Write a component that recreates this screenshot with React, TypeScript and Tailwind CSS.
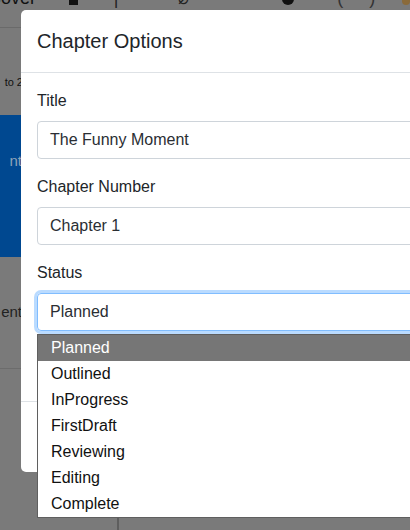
import React from "react";

const statuses = [
  "Planned",
  "Outlined",
  "InProgress",
  "FirstDraft",
  "Reviewing",
  "Editing",
  "Complete",
];

function Field({
  label,
  value,
  focused,
}: {
  label: string;
  value: string;
  focused?: boolean;
}) {
  return (
    <div className="mb-4">
      <div className="mb-2 h-6 text-[16px] leading-6 text-[#212529]">{label}</div>
      <div
        className={
          focused
            ? "flex h-[38px] w-[400px] items-center rounded-[4px] border border-[#80bdff] px-3 text-[16px] text-[#2a2e33] shadow-[0_0_0_3px_rgba(0,123,255,0.27)]"
            : "flex h-[38px] w-[400px] items-center rounded-[4px] border border-[#ced4da] px-3 text-[16px] text-[#2a2e33]"
        }
      >
        {value}
      </div>
    </div>
  );
}

export default function App() {
  return (
    <div
      className="relative h-[530px] w-[410px] overflow-hidden bg-[#7a7a7a]"
      style={{ fontFamily: '"Liberation Sans", Arial, sans-serif' }}
    >
      {/* page behind the backdrop */}
      <div className="flow-root h-[28px] border-b border-[#6a6a6a]">
        <div className="-mt-[12px] flex h-[20px] items-end text-[18px] leading-[20px] text-[#111]">
          <span className="-ml-[12px] w-[50px]">Cover</span>
          <span className="mb-[3px] ml-[32px] h-[14px] w-[9px] bg-[#111]" />
          <span className="ml-[36px] text-[#222]">|</span>
          <span className="ml-[60px] text-[#222]">⌀</span>
          <span className="mb-[3px] ml-[93px] h-[14px] w-[12px] rounded-full bg-[#111]" />
          <span className="ml-[43px] text-[#333]">(</span>
          <span className="ml-[26px] text-[#333]">)</span>
          <span className="mb-[3px] ml-[27px] h-[12px] w-[8px] rounded-full bg-[#8a6a3a]" />
        </div>
      </div>
      <div className="w-[21px]">
        <div className="h-[87px] pt-[47px] text-right text-[11px] leading-[14px] text-[#111] whitespace-nowrap">
          <span className="-mr-[2px]">to 2</span>
        </div>
        <div className="flex h-[142px] items-center justify-end bg-[#004890] pb-[50px] text-[15px] text-[#8fa3b8]">
          <span className="-mr-[1px]">nt</span>
        </div>
        <div className="flex h-[112px] items-center justify-end border-b border-[#6c6c6c] text-[15px] text-[#222]">
          <span className="-mr-[1px]">ent</span>
        </div>
      </div>
      <div className="absolute bottom-0 left-[117px] top-[472px] w-[2px] bg-[#5e5e5e]" />

      {/* modal */}
      <div className="absolute left-[21px] top-[10px] w-[440px] rounded-[5px] bg-white">
        <div className="flex h-[63px] items-center border-b border-[#dee2e6] px-4">
          <h5 className="text-[20px] leading-[30px] text-[#212529]">Chapter Options</h5>
        </div>
        <div className="h-[328px] px-4 pt-4">
          <Field label="Title" value="The Funny Moment" />
          <Field label="Chapter Number" value="Chapter 1" />
          <Field label="Status" value="Planned" focused />
        </div>
        <div className="h-[71px] border-t border-[#dee2e6]" />
      </div>

      {/* native select popup */}
      <ul className="absolute left-[37px] top-[334px] w-[400px] border border-[#5f5f5f] bg-white text-[16px] leading-[26px] text-[#111]">
        {statuses.map((s, i) => (
          <li
            key={s}
            className={
              i === 0
                ? "h-[26px] bg-[#767676] px-[13px] text-white"
                : "h-[26px] px-[13px]"
            }
          >
            {s}
          </li>
        ))}
      </ul>
    </div>
  );
}
